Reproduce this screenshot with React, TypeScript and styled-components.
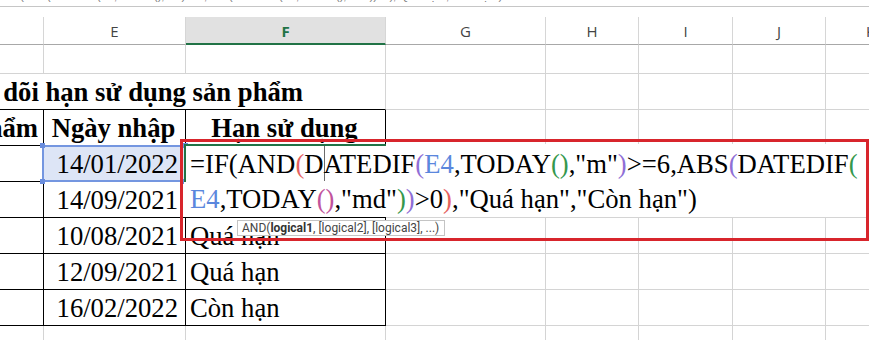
import React from "react";
import styled, { createGlobalStyle } from "styled-components";

const GlobalStyle = createGlobalStyle`
  html, body { margin: 0; padding: 0; background: #ffffff; overflow: hidden; }
  #root { width: 869px; height: 340px; }
`;

const GRID = "#d4d4d4";
const BLACK = "#000000";
const GREEN = "#217346";

type Line = "grid" | "black" | "none" | "head";
const lineColor = (l?: Line) =>
  l === "black" ? BLACK : l === "none" ? "transparent" : l === "head" ? "#a8a8a8" : GRID;

const Page = styled.div`
  position: relative;
  width: 869px;
  height: 340px;
  overflow: hidden;
  background: #fff;
`;

const TopArea = styled.div`
  height: 17px;
  box-sizing: border-box;
`;

const FormulaStrip = styled.div`
  height: 6px;
  border-bottom: 1px solid #c6c6c6;
  overflow: hidden;
  padding-left: 4px;
`;

const FormulaStripText = styled.div`
  margin-top: -9px;
  font-family: "Liberation Sans", Arial, sans-serif;
  font-size: 11px;
  line-height: 11px;
  color: #777;
  white-space: nowrap;
`;

const Sheet = styled.div`
  display: grid;
  grid-template-columns: 44px 142px 200px 160px 93px 94px 93px 90px;
  grid-template-rows: 28px 29px repeat(8, 36px) 30px;
`;

const HeadCell = styled.div<{ $selected?: boolean }>`
  box-sizing: border-box;
  display: flex;
  align-items: center;
  justify-content: center;
  font-family: "Open Sans", "Noto Sans", sans-serif;
  font-size: 15px;
  color: ${(p) => (p.$selected ? GREEN : "#444")};
  font-weight: ${(p) => (p.$selected ? 700 : 400)};
  background: ${(p) => (p.$selected ? "#e1e1e1" : "#fff")};
  border-right: 1px solid #d6d6d6;
  border-bottom: ${(p) => (p.$selected ? `2px solid ${GREEN}` : "1px solid #a8a8a8")};
  padding-top: 1px;
`;

const Cell = styled.div<{
  $r?: Line;
  $b?: Line;
  $align?: "left" | "right" | "center";
  $bold?: boolean;
  $span?: number;
  $pr?: number;
}>`
  box-sizing: border-box;
  position: relative;
  display: flex;
  align-items: flex-end;
  justify-content: ${(p) =>
    p.$align === "right" ? "flex-end" : p.$align === "center" ? "center" : "flex-start"};
  grid-column: span ${(p) => p.$span ?? 1};
  border-right: 1px solid ${(p) => lineColor(p.$r)};
  border-bottom: 1px solid ${(p) => lineColor(p.$b)};
  font-family: "Liberation Serif", "Times New Roman", serif;
  font-size: 20pt;
  line-height: 30px;
  font-weight: ${(p) => (p.$bold ? 700 : 400)};
  color: #000;
  padding: 0 ${(p) => p.$pr ?? 6}px 2px 4px;
  white-space: nowrap;
  overflow: hidden;
`;

const RefCell = styled(Cell)`
  overflow: visible;
  background: #dde5f6;
  &::after {
    content: "";
    position: absolute;
    left: -2px;
    top: -1px;
    right: -1px;
    bottom: -1px;
    border: 2px solid #7496e0;
    pointer-events: none;
  }
`;

const Handle = styled.span<{ $x: "l" | "r"; $y: "t" | "b" }>`
  position: absolute;
  width: 5px;
  height: 5px;
  background: #6a8ddd;
  z-index: 1;
  ${(p) => (p.$x === "l" ? "left: -4px;" : "right: -3px;")}
  ${(p) => (p.$y === "t" ? "top: -3px;" : "bottom: -3px;")}
`;

const EditCell = styled(Cell)`
  overflow: visible;
`;

const Editor = styled.div`
  position: absolute;
  left: -2px;
  top: -2px;
  width: 690px;
  height: 73px;
  background: #fff;
  z-index: 5;
  overflow: hidden;
  box-sizing: border-box;
  padding: 3px 0 0 6px;
  font-family: "Liberation Serif", "Times New Roman", serif;
  font-size: 20pt;
  line-height: 35px;
  color: #000;
`;

const GreenFrame = styled.div`
  position: absolute;
  left: -2px;
  top: -2px;
  width: 202px;
  height: 38px;
  box-sizing: border-box;
  border-top: 2px solid ${GREEN};
  border-left: 2px solid ${GREEN};
  z-index: 6;
  pointer-events: none;
`;

const FormulaLine = styled.div`
  white-space: nowrap;
`;

const Paren = styled.span<{ $c: string }>`
  color: ${(p) => p.$c};
`;

const Caret = styled.span`
  display: inline-block;
  width: 1px;
  margin-right: -1px;
  height: 36px;
  vertical-align: top;
  margin-top: -2px;
  background: #6b6b6b;
`;

const Tooltip = styled.div`
  position: absolute;
  left: 51px;
  top: 74px;
  z-index: 7;
  background: #fff;
  border: 1px solid #c4c4c4;
  padding: 0 5px 0 4px;
  height: 16px;
  box-sizing: border-box;
  display: flex;
  align-items: center;
  font-family: Roboto, "Open Sans", sans-serif;
  font-size: 12px;
  line-height: 14px;
  color: #444;
  white-space: nowrap;
  b {
    font-weight: 700;
    color: #333;
  }
`;

const Annotation = styled.div`
  position: absolute;
  left: 180px;
  top: 139px;
  width: 689px;
  height: 102px;
  box-sizing: border-box;
  border: 3.5px solid #d8252c;
  z-index: 10;
  pointer-events: none;
`;

const RED = "#e5625f";
const PURPLE = "#8f6fd6";
const BLUE = "#5b87dd";
const GRN = "#35984d";
const PINK = "#c1539c";

const headers = ["", "E", "F", "G", "H", "I", "J", "K"];

const rightBlank = (n: number) =>
  Array.from({ length: n }).map((_, i) => <Cell key={`b${i}`} />);

const rows: { date: string; status: string }[] = [
  { date: "14/09/2021", status: "Còn hạn" },
  { date: "10/08/2021", status: "Quá hạn" },
  { date: "12/09/2021", status: "Quá hạn" },
  { date: "16/02/2022", status: "Còn hạn" },
];

export default function App() {
  return (
    <Page>
      <GlobalStyle />
      <TopArea>
        <FormulaStrip>
          <FormulaStripText>
            =IF(AND(DATEDIF(E4,TODAY(),"m")&gt;=6,ABS(DATEDIF(E4,TODAY(),"md"))&gt;0),"Quá hạn","Còn hạn")
          </FormulaStripText>
        </FormulaStrip>
      </TopArea>
      <Sheet>
        {headers.map((h) => (
          <HeadCell key={h || "D"} $selected={h === "F"}>
            {h}
          </HeadCell>
        ))}

        {/* row 1 */}
        {rightBlank(8)}

        {/* row 2: title */}
        <Cell $span={3} $b="black" $align="right" $bold $pr={82}>
          Bảng theo dõi hạn sử dụng sản phẩm
        </Cell>
        {rightBlank(5)}

        {/* row 3: table header */}
        <Cell $r="black" $b="black" $align="right" $bold $pr={5}>
          Tên sản phẩm
        </Cell>
        <Cell $r="black" $b="black" $align="center" $bold>
          Ngày nhập
        </Cell>
        <Cell $r="black" $b="black" $align="center" $bold>
          Hạn sử dụng
        </Cell>
        {rightBlank(5)}

        {/* row 4: editing */}
        <Cell $r="black" $b="black" />
        <RefCell $r="black" $b="black" $align="right" $pr={7}>
          14/01/2022
          <Handle $x="l" $y="t" />
          <Handle $x="l" $y="b" />
          <Handle $x="r" $y="t" />
          <Handle $x="r" $y="b" />
        </RefCell>
        <EditCell $r="black" $b="black">
          <GreenFrame />
          <Editor>
            <FormulaLine>
              =IF(AND<Paren $c={RED}>(</Paren>D<Caret />ATEDIF<Paren $c={PURPLE}>(</Paren>
              <Paren $c={BLUE}>E4</Paren>,TODAY<Paren $c={GRN}>()</Paren>,"m"
              <Paren $c={PURPLE}>)</Paren>&gt;=6,ABS<Paren $c={PURPLE}>(</Paren>DATEDIF
              <Paren $c={GRN}>(</Paren>
            </FormulaLine>
            <FormulaLine>
              <Paren $c={BLUE}>E4</Paren>,TODAY<Paren $c={PINK}>()</Paren>,"md"
              <Paren $c={GRN}>)</Paren>
              <Paren $c={PURPLE}>)</Paren>&gt;0<Paren $c={RED}>)</Paren>,"Quá hạn","Còn hạn")
            </FormulaLine>
          </Editor>
          <Tooltip>
            AND(<b>logical1</b>, [logical2], [logical3], ...)
          </Tooltip>
        </EditCell>
        {rightBlank(5)}

        {/* rows 5-8 */}
        {rows.map((r) => (
          <React.Fragment key={r.date}>
            <Cell $r="black" $b="black" />
            <Cell $r="black" $b="black" $align="right" $pr={7}>
              {r.date}
            </Cell>
            <Cell $r="black" $b="black">
              {r.status}
            </Cell>
            {rightBlank(5)}
          </React.Fragment>
        ))}

        {/* row 9 */}
        {rightBlank(8)}
      </Sheet>
      <Annotation />
    </Page>
  );
}
